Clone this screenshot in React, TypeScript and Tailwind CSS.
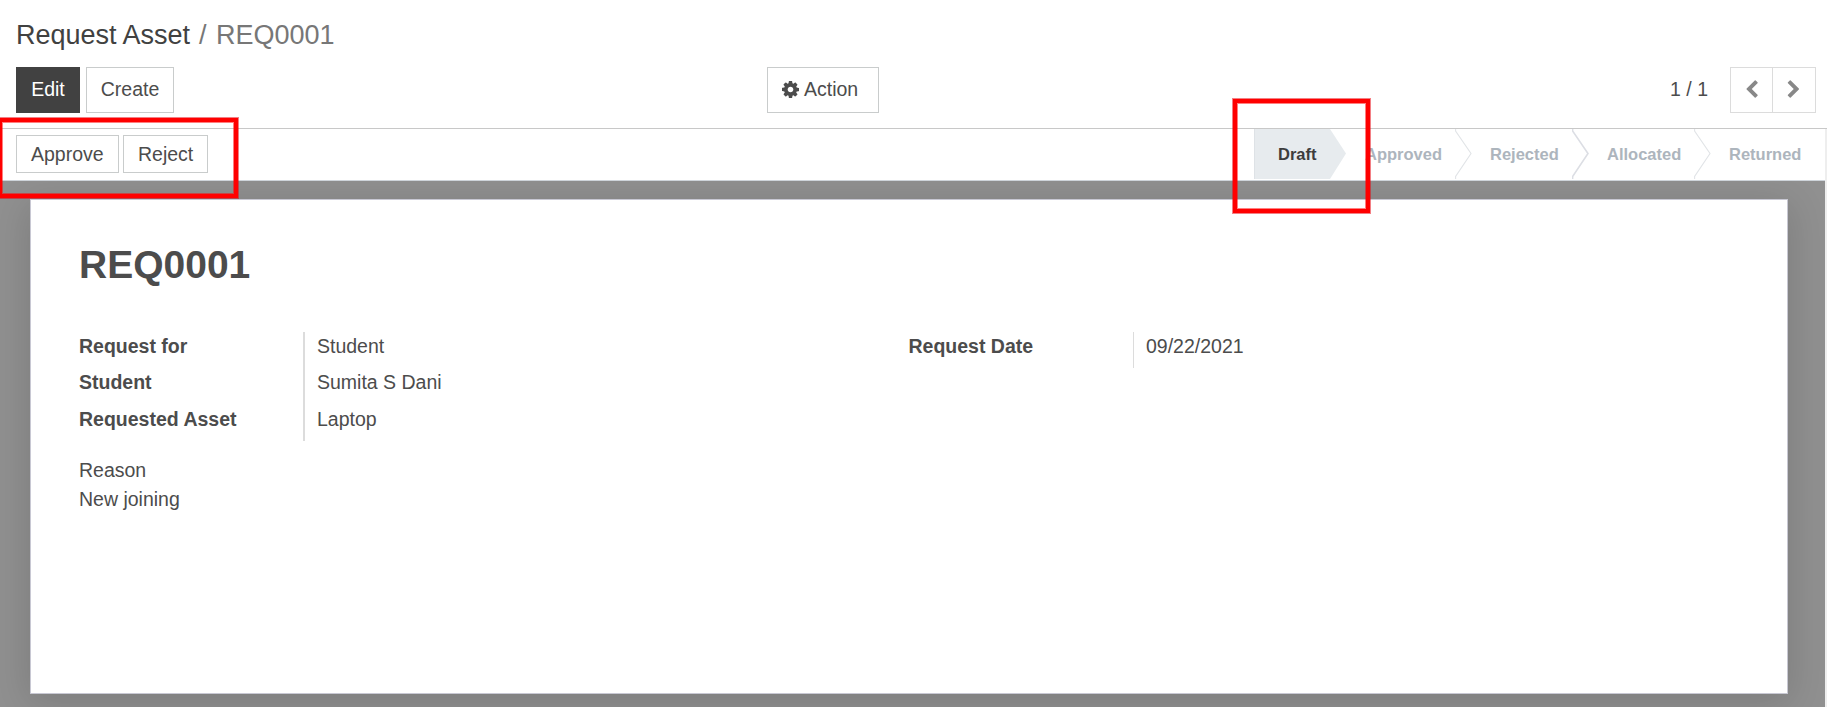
import type { ReactNode } from "react";

const COG =
  "M1024 896q0-106-75-181t-181-75-181 75-75 181 75 181 181 75 181-75 75-181zm512-109v222q0 12-8 23t-20 13l-185 28q-19 54-39 91 35 50 107 138 10 12 10 25t-9 23q-27 37-99 108t-94 71q-12 0-26-9l-138-108q-44 23-91 38-16 136-29 186-7 28-36 28h-222q-14 0-24.5-8.5t-11.5-21.5l-28-184q-49-16-90-37l-141 107q-10 9-25 9-14 0-25-11-126-114-165-168-7-10-7-23 0-12 8-23 15-21 51-66.5t54-70.5q-27-50-41-99l-183-27q-13-2-21-12.5t-8-23.5v-222q0-12 8-23t19-13l186-28q14-46 39-92-40-57-107-138-10-12-10-24 0-10 9-23 26-36 98.5-107.5t94.5-71.5q13 0 26 10l138 107q44-23 91-38 16-136 29-186 7-28 36-28h222q14 0 24.5 8.5t11.5 21.5l28 184q49 16 90 37l142-107q9-9 24-9 13 0 25 10 129 119 165 170 7 8 7 22 0 12-8 23-15 21-51 66.5t-54 70.5q26 50 41 98l183 28q13 2 21 12.5t8 23.5z";
const LEFT =
  "M1427 301l-531 531 531 531q19 19 19 45t-19 45l-166 166q-19 19-45 19t-45-19l-742-742q-19-19-19-45t19-45l742-742q19-19 45-19t45 19l166 166q19 19 19 45t-19 45z";
const RIGHT =
  "M1363 877l-742 742q-19 19-45 19t-45-19l-166-166q-19-19-19-45t19-45l531-531-531-531q-19-19-19-45t19-45l166-166q19-19 45-19t45 19l742 742q19 19 19 45t-19 45z";

function Button({ className, children }: { className: string; children: ReactNode }) {
  return (
    <button className={`flex items-center border whitespace-nowrap ${className}`}>
      {children}
    </button>
  );
}

function Stage({ label, className, heavy, last }: { label: string; className: string; heavy?: boolean; last?: boolean }) {
  return (
    <div className={`flex h-[50px] items-center justify-between font-bold text-[#adb5bd] ${className}`}>
      <span>{label}</span>
      {!last && (
        <svg width="17" height="50" viewBox="0 0 17 50" fill="none" stroke={heavy ? "#dcdee4" : "#e1e4e7"} strokeWidth={heavy ? 1.6 : 1.1}>
          <path d="M.6 0V2L16 24.5L.6 47.5V50" />
        </svg>
      )}
    </div>
  );
}

export default function App() {
  return (
    <div className="relative flex h-[707px] w-[1827px] flex-col overflow-hidden bg-white font-['Liberation_Sans',Arial,sans-serif] text-[19.5px] leading-[29px] text-[#4c4c4c]">
      <header className="flex h-[129px] shrink-0 flex-col border-b border-[#c8c8c8] pl-4 pr-[11px]">
        <nav className="flex h-[67px] pt-[15px] text-[27px] leading-[40px]">
          <span className="w-[183px] text-[#414141]">Request Asset</span>
          <span className="w-[17px] text-[#777777]">/</span>
          <span className="text-[#777777]">REQ0001</span>
        </nav>
        <div className="flex h-[46px] items-stretch">
          <Button className="w-16 justify-center border-[#414141] bg-[#414141] pb-[2px] text-white">Edit</Button>
          <Button className="ml-[6px] w-[88px] justify-center border-[#c9cccc] pb-[2px]">Create</Button>
          <Button className="ml-[593px] w-28 gap-[5px] border-[#c9cccc] pb-[2px] pl-[14px]">
            <svg width="17" height="17" viewBox="0 128 1536 1536" fill="#4c4c4c"><path d={COG} /></svg>
            Action
          </Button>
          <span className="ml-auto mr-[22px] flex items-center pb-[2px]">1 / 1</span>
          <Button className="w-[43px] justify-center border-[#dcdcdc]">
            <svg width="19.5" height="19.5" viewBox="0 0 1792 1792" fill="#888888"><path d={LEFT} /></svg>
          </Button>
          <Button className="w-[43px] justify-center border-l-0 border-[#dcdcdc]">
            <svg width="19.5" height="19.5" viewBox="0 0 1792 1792" fill="#888888"><path d={RIGHT} /></svg>
          </Button>
        </div>
      </header>

      <div className="flex min-h-0 flex-1">
        <main className="flex w-[1825px] flex-col">
          <div className="flex h-[52px] shrink-0 justify-between border-b border-[#ced4da] pl-4">
            <div className="flex h-[44px] gap-1 pt-[6px]">
              <Button className="w-[103px] border-[#c9cccc] pl-[14px]">Approve</Button>
              <Button className="w-[85px] border-[#c9cccc] pl-[14px]">Reject</Button>
            </div>
            <div className="flex text-[16.5px]">
              <div className="flex h-[50px] w-[92px] items-center border-l border-[#dee2e6] bg-[#e7ebee] pl-[23px] font-bold text-[#3d3d3d] [clip-path:polygon(0_0,76px_0,100%_49%,76px_100%,0_100%)]">
                Draft
              </div>
              <Stage label="Approved" className="w-[126px] pl-[19px]" />
              <Stage label="Rejected" className="w-[117px] pl-[18px]" heavy />
              <Stage label="Allocated" className="w-[122px] pl-[18px]" />
              <Stage label="Returned" className="w-[114px] pl-[18px]" last />
            </div>
          </div>
          <div className="flex-1 overflow-hidden bg-[#909090] pl-[30px] pt-[18px]">
            <section className="h-[495px] w-[1758px] border border-[#c8c8d3] bg-white px-12 pt-[41px] shadow-[0_7px_36px_2px_rgba(0,0,0,0.14)]">
              <h1 className="h-[91px] text-[39px] leading-[47px] font-bold">REQ0001</h1>
              <div className="flex">
                <dl className="grid w-[829.5px] grid-cols-[224px_1fr] grid-rows-[36px_37px_36px]">
                  <dt className="font-bold">Request for</dt>
                  <dd className="border-l-2 border-[#dcdcdc] pl-3">Student</dd>
                  <dt className="font-bold">Student</dt>
                  <dd className="border-l-2 border-[#dcdcdc] pl-3">Sumita S Dani</dd>
                  <dt className="font-bold">Requested Asset</dt>
                  <dd className="border-l-2 border-[#dcdcdc] pl-3">Laptop</dd>
                </dl>
                <dl className="grid flex-1 grid-cols-[224.5px_1fr] grid-rows-[36px]">
                  <dt className="font-bold">Request Date</dt>
                  <dd className="border-l border-[#dcdcdc] pl-3">09/22/2021</dd>
                </dl>
              </div>
              <p className="mt-[15px]">Reason</p>
              <p>New joining</p>
            </section>
          </div>
        </main>
        <div className="w-[2px] bg-[#eeeeee]" />
      </div>

      <div className="absolute top-[117px] left-[-3px] h-[82px] w-[242px] border border-red-600/50">
        <div className="h-full w-full border-4 border-[#ff0000] shadow-[inset_0_0_0_1px_rgba(255,0,0,0.5)]" />
      </div>
      <div className="absolute top-[98px] left-[1232px] h-[116px] w-[139px] border border-red-600/50">
        <div className="h-full w-full border-4 border-[#ff0000] shadow-[inset_0_0_0_1px_rgba(255,0,0,0.5)]" />
      </div>
    </div>
  );
}
